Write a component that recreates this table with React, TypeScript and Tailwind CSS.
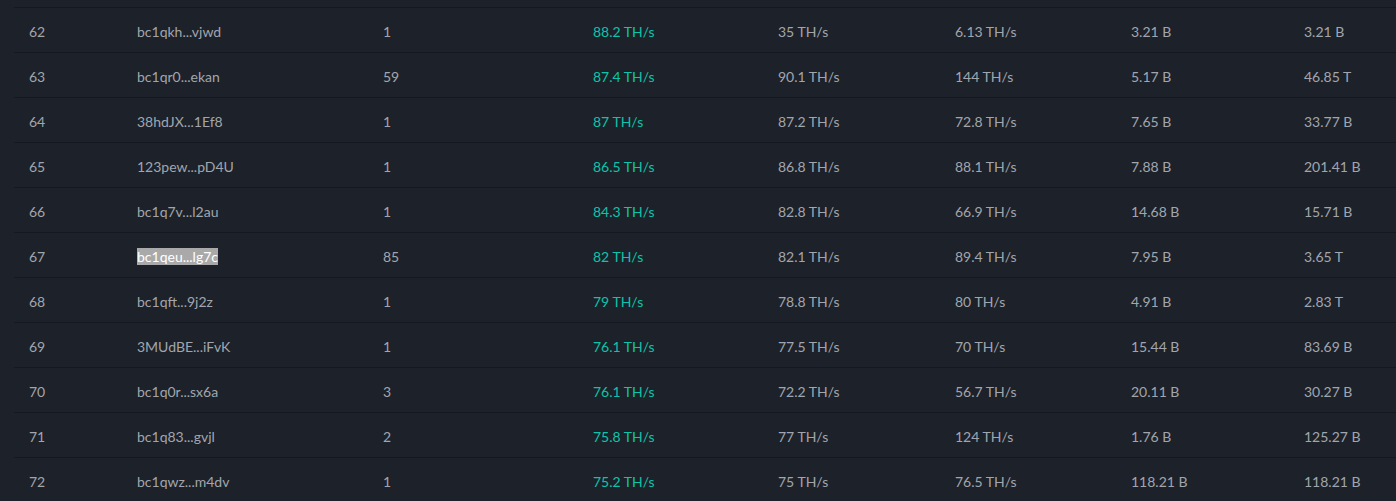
import React from 'react';

type Row = {
	rank: number;
	address: string;
	workers: string;
	hashrate: string;
	h1: string;
	h24: string;
	best: string;
	bestEver: string;
	selected?: boolean;
};

const rows: Row[] = [
	{ rank: 62, address: 'bc1qkh...vjwd', workers: '1', hashrate: '88.2 TH/s', h1: '35 TH/s', h24: '6.13 TH/s', best: '3.21 B', bestEver: '3.21 B' },
	{ rank: 63, address: 'bc1qr0...ekan', workers: '59', hashrate: '87.4 TH/s', h1: '90.1 TH/s', h24: '144 TH/s', best: '5.17 B', bestEver: '46.85 T' },
	{ rank: 64, address: '38hdJX...1Ef8', workers: '1', hashrate: '87 TH/s', h1: '87.2 TH/s', h24: '72.8 TH/s', best: '7.65 B', bestEver: '33.77 B' },
	{ rank: 65, address: '123pew...pD4U', workers: '1', hashrate: '86.5 TH/s', h1: '86.8 TH/s', h24: '88.1 TH/s', best: '7.88 B', bestEver: '201.41 B' },
	{ rank: 66, address: 'bc1q7v...l2au', workers: '1', hashrate: '84.3 TH/s', h1: '82.8 TH/s', h24: '66.9 TH/s', best: '14.68 B', bestEver: '15.71 B' },
	{ rank: 67, address: 'bc1qeu...lg7c', workers: '85', hashrate: '82 TH/s', h1: '82.1 TH/s', h24: '89.4 TH/s', best: '7.95 B', bestEver: '3.65 T', selected: true },
	{ rank: 68, address: 'bc1qft...9j2z', workers: '1', hashrate: '79 TH/s', h1: '78.8 TH/s', h24: '80 TH/s', best: '4.91 B', bestEver: '2.83 T' },
	{ rank: 69, address: '3MUdBE...iFvK', workers: '1', hashrate: '76.1 TH/s', h1: '77.5 TH/s', h24: '70 TH/s', best: '15.44 B', bestEver: '83.69 B' },
	{ rank: 70, address: 'bc1q0r...sx6a', workers: '3', hashrate: '76.1 TH/s', h1: '72.2 TH/s', h24: '56.7 TH/s', best: '20.11 B', bestEver: '30.27 B' },
	{ rank: 71, address: 'bc1q83...gvjl', workers: '2', hashrate: '75.8 TH/s', h1: '77 TH/s', h24: '124 TH/s', best: '1.76 B', bestEver: '125.27 B' },
	{ rank: 72, address: 'bc1qwz...m4dv', workers: '1', hashrate: '75.2 TH/s', h1: '75 TH/s', h24: '76.5 TH/s', best: '118.21 B', bestEver: '118.21 B' },
];

const App: React.FC = () => {
	return (
		<div
			className="min-h-screen bg-[#1d2129] pl-[14px] text-[14px] text-[#a1a6ae] overflow-hidden"
			style={{ fontFamily: 'Lato, "Open Sans", sans-serif' }}
		>
			<div className="h-[8px] border-b border-[#15181e]" />
			{rows.map((r) => (
				<div
					key={r.rank}
					className="grid h-[45px] items-center border-b border-[#15181e] pl-[15px] pt-[2px] grid-cols-[108px_246px_210px_185px_177px_176px_173px_1fr]"
				>
					<span>{r.rank}</span>
					<span>
						{r.selected ? (
							<span className="bg-[#a9a9a9] text-white">{r.address}</span>
						) : (
							r.address
						)}
					</span>
					<span>{r.workers}</span>
					<span className="text-[#0cc4a9]">{r.hashrate}</span>
					<span>{r.h1}</span>
					<span>{r.h24}</span>
					<span>{r.best}</span>
					<span>{r.bestEver}</span>
				</div>
			))}
		</div>
	);
};

export default App;
